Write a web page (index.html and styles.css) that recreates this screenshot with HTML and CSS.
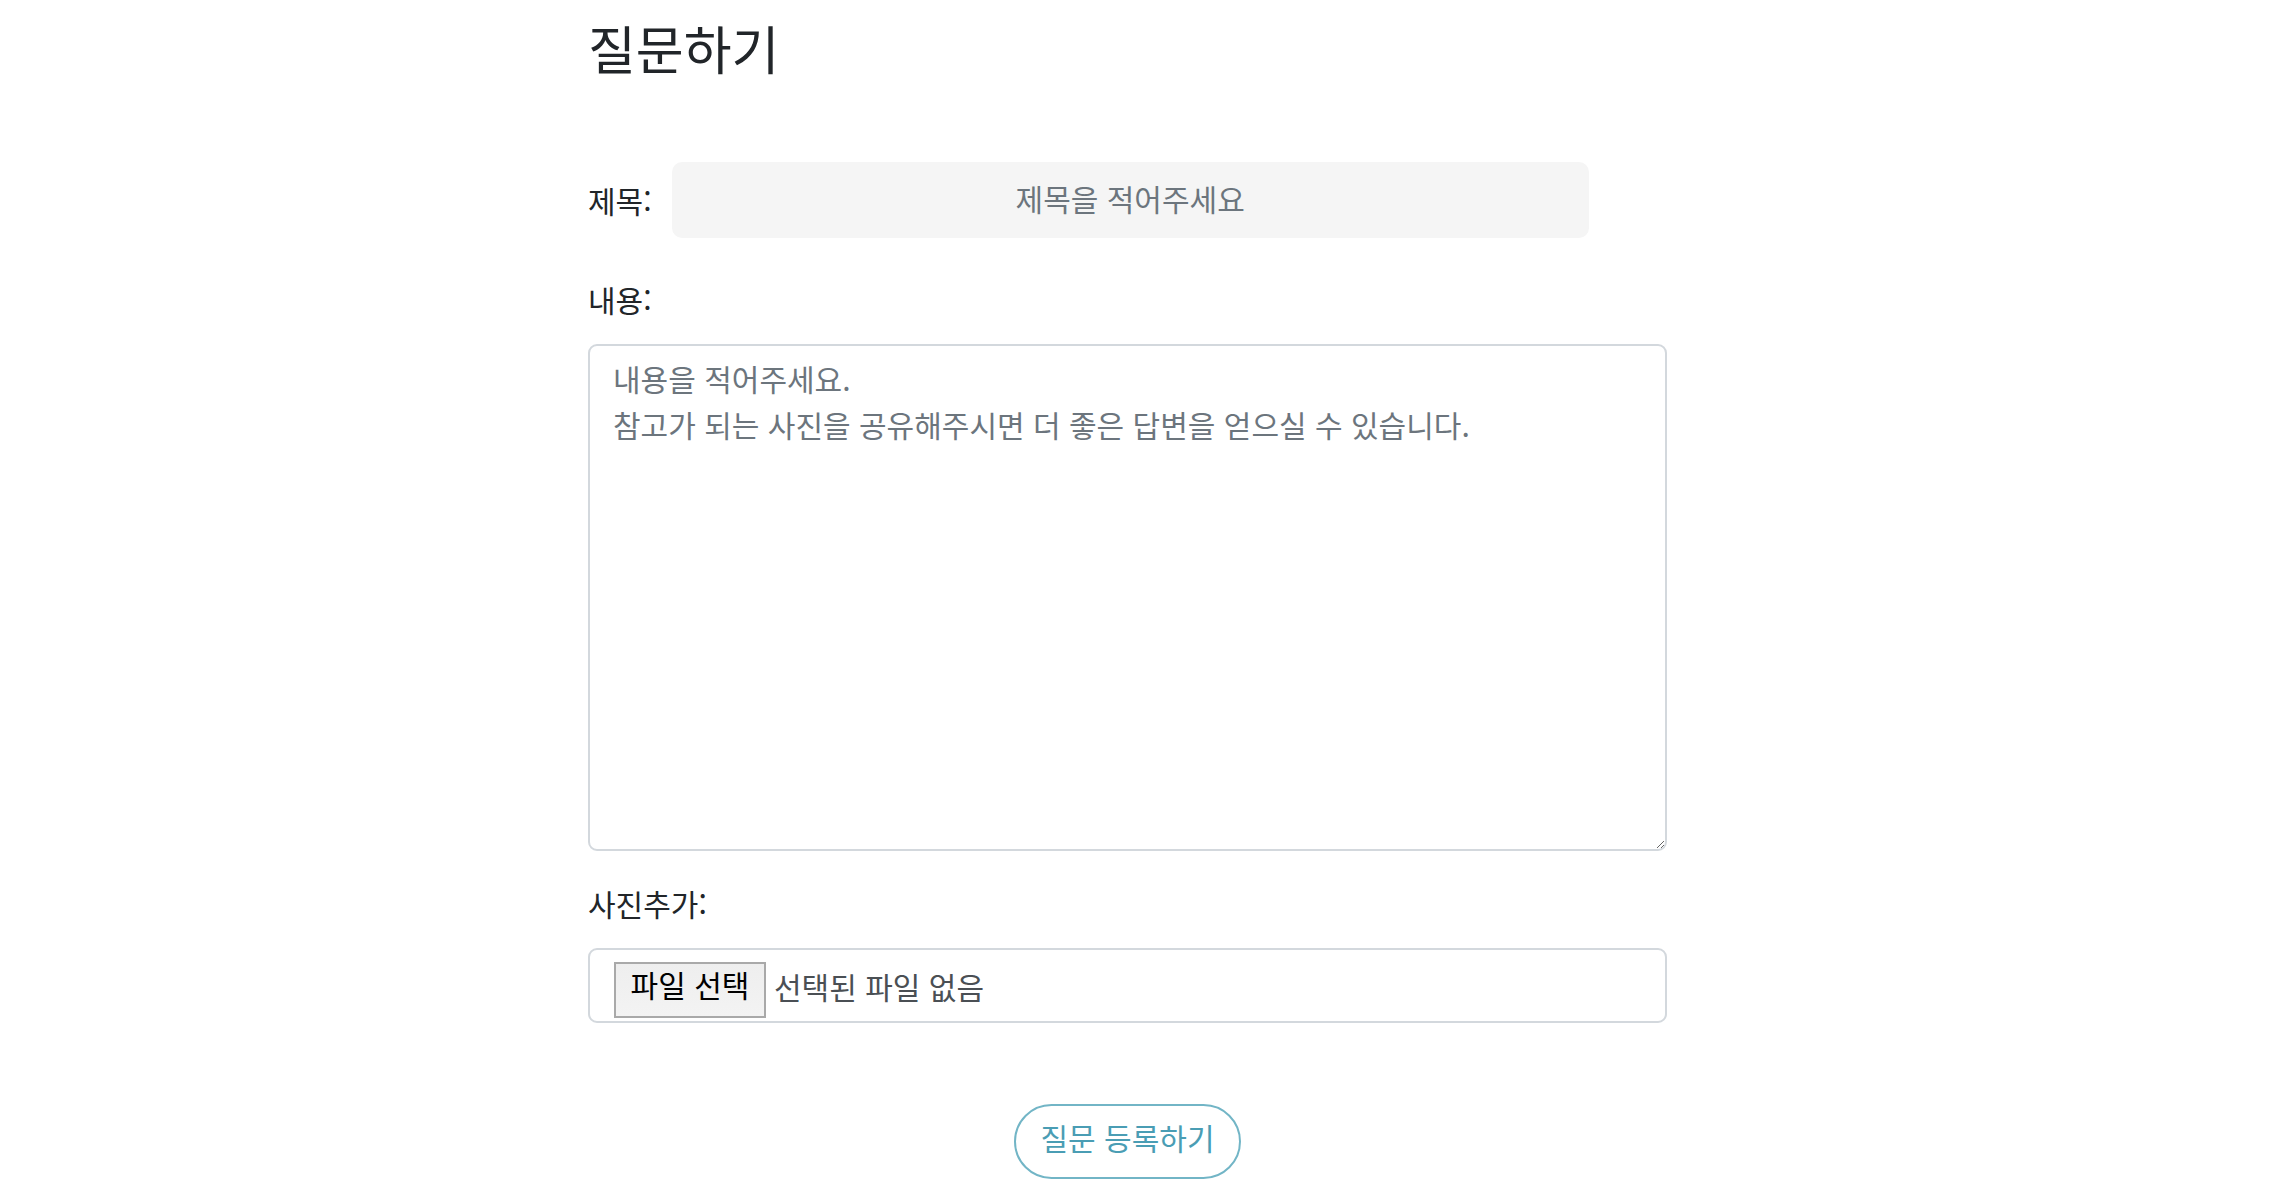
FILE: index.html
```html
<!DOCTYPE html>
<html lang="ko">
<head>
<meta charset="utf-8">
<title>질문하기</title>
<link rel="stylesheet" href="styles.css">
</head>
<body>
<main class="page">
  <h1 class="page-title">질문하기</h1>
  <form class="ask-form">
    <div class="row-inline">
      <label class="field-label" for="title">제목:</label>
      <input class="title-input" id="title" type="text" placeholder="제목을 적어주세요">
    </div>
    <div class="field field-content">
      <label class="field-label" for="content">내용:</label>
      <textarea class="content-input" id="content" placeholder="내용을 적어주세요.&#10;참고가 되는 사진을 공유해주시면 더 좋은 답변을 얻으실 수 있습니다."></textarea>
    </div>
    <div class="field field-photo">
      <span class="field-label">사진추가:</span>
      <div class="file-box">
        <span class="file-btn">파일 선택</span>
        <span class="file-name">선택된 파일 없음</span>
      </div>
    </div>
    <div class="submit-row">
      <button type="button" class="submit-btn">질문 등록하기</button>
    </div>
  </form>
</main>
</body>
</html>
```

FILE: styles.css
```css
* { box-sizing: border-box; }
html, body {
  margin: 0;
  padding: 0;
  background: #ffffff;
}
body {
  font-family: "Noto Sans CJK KR", "Noto Sans", sans-serif;
  color: #212529;
  padding-right: 19px;
}
.page {
  width: 1079px;
  margin: 0 auto;
}
.page-title {
  margin: 0;
  padding-top: 17px;
  font-size: 52px;
  font-weight: 400;
  line-height: 62px;
  color: #212529;
}
.ask-form {
  display: flex;
  flex-direction: column;
  margin-top: 83px;
}
.row-inline {
  display: flex;
  align-items: center;
  gap: 20px;
}
.field-label {
  font-size: 30px;
  line-height: 45px;
  color: #212529;
}
.title-input {
  width: 85%;
  height: 76px;
  border: none;
  border-radius: 10px;
  background: #f5f5f5;
  padding: 0 0 5px;
  font-family: inherit;
  font-size: 30px;
  text-align: center;
  color: #212529;
  outline: none;
}
.title-input::placeholder { color: #6c757d; }
.field {
  display: flex;
  flex-direction: column;
  gap: 22px;
}
.field-content { margin-top: 39px; }
.field-photo { margin-top: 30px; }
.content-input {
  display: block;
  width: 100%;
  height: 507px;
  border: 2px solid #d3d8dd;
  border-radius: 9px;
  padding: 9px 23px;
  font-family: inherit;
  font-size: 30px;
  line-height: 46px;
  color: #212529;
  resize: vertical;
  outline: none;
}
.content-input::placeholder { color: #6c757d; }
.file-box {
  display: flex;
  align-items: center;
  gap: 8px;
  height: 75px;
  border: 2px solid #d3d8dd;
  border-radius: 9px;
  padding: 0 24px;
}
.file-btn {
  display: block;
  width: 152px;
  height: 56px;
  margin-top: 9px;
  border: 2px solid #a9a9a9;
  background: linear-gradient(#eeeeee, #f3f3f3);
  font-size: 30px;
  line-height: 40px;
  text-align: center;
  color: #000000;
}
.file-name {
  font-size: 30px;
  color: #4a4f54;
}
.submit-row {
  display: flex;
  justify-content: center;
  margin-top: 81px;
  padding-bottom: 9px;
}
.submit-btn {
  width: 227px;
  height: 75px;
  border: 2px solid #72b5c6;
  border-radius: 38px;
  background: #ffffff;
  font-family: inherit;
  font-size: 30px;
  line-height: 40px;
  color: #4a9db4;
  padding: 0 0 9px;
}
```
